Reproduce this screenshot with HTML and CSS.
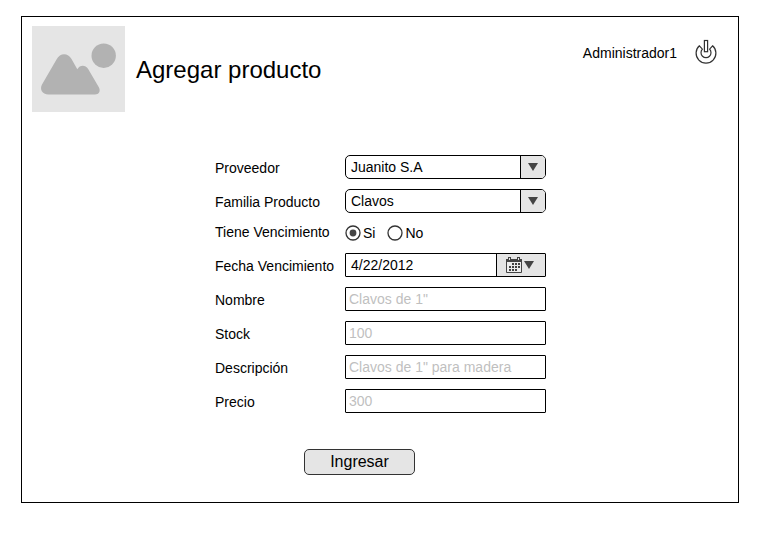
FILE: index.html
```html
<!DOCTYPE html>
<html lang="es">
<head>
<meta charset="utf-8">
<title>Agregar producto</title>
<link rel="stylesheet" href="styles.css">
</head>
<body>
<main class="frame">
  <header class="header">
    <svg class="logo" width="93" height="86" viewBox="0 0 93 86">
      <circle cx="71.7" cy="29.7" r="12.2"/>
      <path d="M10 58.5 24.5 33.5C28 26.5 36 26.5 39.5 33L45.3 43.2C48 38.5 53.5 38.8 56 42.8L66.7 61C69 65 67 68.5 63 68.5H16.5C10 68.5 7.5 63 10 58.5Z"/>
    </svg>
    <h1 class="title">Agregar producto</h1>
    <span class="user">Administrador1</span>
    <svg class="power" width="24" height="26" viewBox="0 0 24 26">
      <path d="M5.4 6.8 8.4 10.2A5 5 0 1 0 15.6 10.2L18.6 6.8A9.9 9.9 0 1 1 5.4 6.8Z"/>
      <rect x="10.4" y="1.5" width="3.2" height="11.2"/>
    </svg>
  </header>

  <form class="form">
    <label class="label">Proveedor</label>
    <div class="select"><span class="value">Juanito S.A</span><span class="toggle"><svg width="10" height="8"><path d="M0 0H10L5 8Z"/></svg></span></div>

    <label class="label">Familia Producto</label>
    <div class="select"><span class="value">Clavos</span><span class="toggle"><svg width="10" height="8"><path d="M0 0H10L5 8Z"/></svg></span></div>

    <label class="label label-radio">Tiene Vencimiento</label>
    <div class="radios">
      <svg width="16" height="16" viewBox="0 0 16 16"><circle class="ring" cx="8" cy="8" r="7"/><circle class="dot" cx="8" cy="8" r="3.4"/></svg>
      <span class="si">Si</span>
      <svg width="16" height="16" viewBox="0 0 16 16"><circle class="ring" cx="8" cy="8" r="7"/></svg>
      <span>No</span>
    </div>

    <label class="label">Fecha Vencimiento</label>
    <div class="select date"><span class="value">4/22/2012</span><span class="toggle">
      <svg width="16" height="16" viewBox="0 0 16 16">
        <path class="cal" d="M.5 3.5H15.5V15.5H.5Z"/>
        <path d="M0 2H2V0H5V2H11V0H14V2H16V5H0Z"/>
        <path class="hole" d="M3 1H4V3H3ZM12 1H13V3H12Z"/>
        <path d="M6 6h2v2H6zM9 6h2v2H9zM12 6h2v2h-2zM3 9h2v2H3zM6 9h2v2H6zM9 9h2v2H9zM12 9h2v2h-2zM3 12h2v2H3zM6 12h2v2H6zM9 12h2v2H9z"/>
      </svg>
      <svg width="10" height="8"><path d="M0 0H10L5 8Z"/></svg></span></div>

    <label class="label">Nombre</label>
    <div class="input">Clavos de 1"</div>
    <label class="label">Stock</label>
    <div class="input">100</div>
    <label class="label">Descripción</label>
    <div class="input">Clavos de 1" para madera</div>
    <label class="label">Precio</label>
    <div class="input">300</div>
  </form>

  <button class="submit" type="button">Ingresar</button>
</main>
</body>
</html>
```

FILE: styles.css
```css
* { box-sizing: border-box; }
body {
  margin: 0;
  background: #fff;
  color: #000;
  font: 14px/16px "Liberation Sans", Arial, sans-serif;
}
svg { display: block; flex: none; }
.frame {
  display: flex;
  flex-direction: column;
  width: 718px;
  height: 487px;
  margin: 16px 0 0 21px;
  padding: 9px 20px 0 10px;
  border: 1px solid #000;
}
.header { display: flex; align-items: flex-start; height: 86px; }
.logo { background: #e5e5e5; fill: #b2b2b2; }
.title {
  margin: 30px auto 0 11px;
  font-size: 24px;
  line-height: 28px;
  font-weight: 400;
}
.user { margin-top: 19px; }
.power {
  margin: 13px 0 0 17px;
  fill: #fff;
  stroke: #333;
  stroke-width: 1.2;
}
.form {
  display: grid;
  grid-template-columns: 130px 201px;
  grid-template-rows: 24px 24px 20px 24px 24px 24px 24px 24px;
  row-gap: 10px;
  margin: 43px 0 0 183px;
}
.label { padding-top: 5px; white-space: nowrap; }
.label-radio { padding-top: 1px; }
.select {
  display: flex;
  overflow: hidden;
  border: 1px solid #000;
  border-radius: 5px;
}
.value { flex: 1; padding: 3px 5px; }
.toggle {
  display: flex;
  align-items: center;
  justify-content: center;
  width: 25px;
  border-left: 1px solid #000;
  background: #e5e5e5;
  fill: #444;
}
.date { border-radius: 1px; }
.date .toggle { width: 49px; gap: 2px; padding-right: 2px; }
.cal { fill: #eee; stroke: #444; }
.hole { fill: #e5e5e5; }
.input {
  padding: 3px;
  border: 1px solid #000;
  border-radius: 1px;
  color: #bfbfbf;
  white-space: nowrap;
}
.radios { display: flex; align-items: center; gap: 2px; }
.ring { fill: #fff; stroke: #333; stroke-width: 1.3; }
.dot { fill: #444; }
.si { margin-right: 10px; }
.submit {
  width: 111px;
  height: 26px;
  margin: 36px 0 0 272px;
  padding: 0;
  border: 1px solid #333;
  border-radius: 5px;
  background: #e5e5e5;
  color: #000;
  font: 16px/22px "Liberation Sans", Arial, sans-serif;
}
```
